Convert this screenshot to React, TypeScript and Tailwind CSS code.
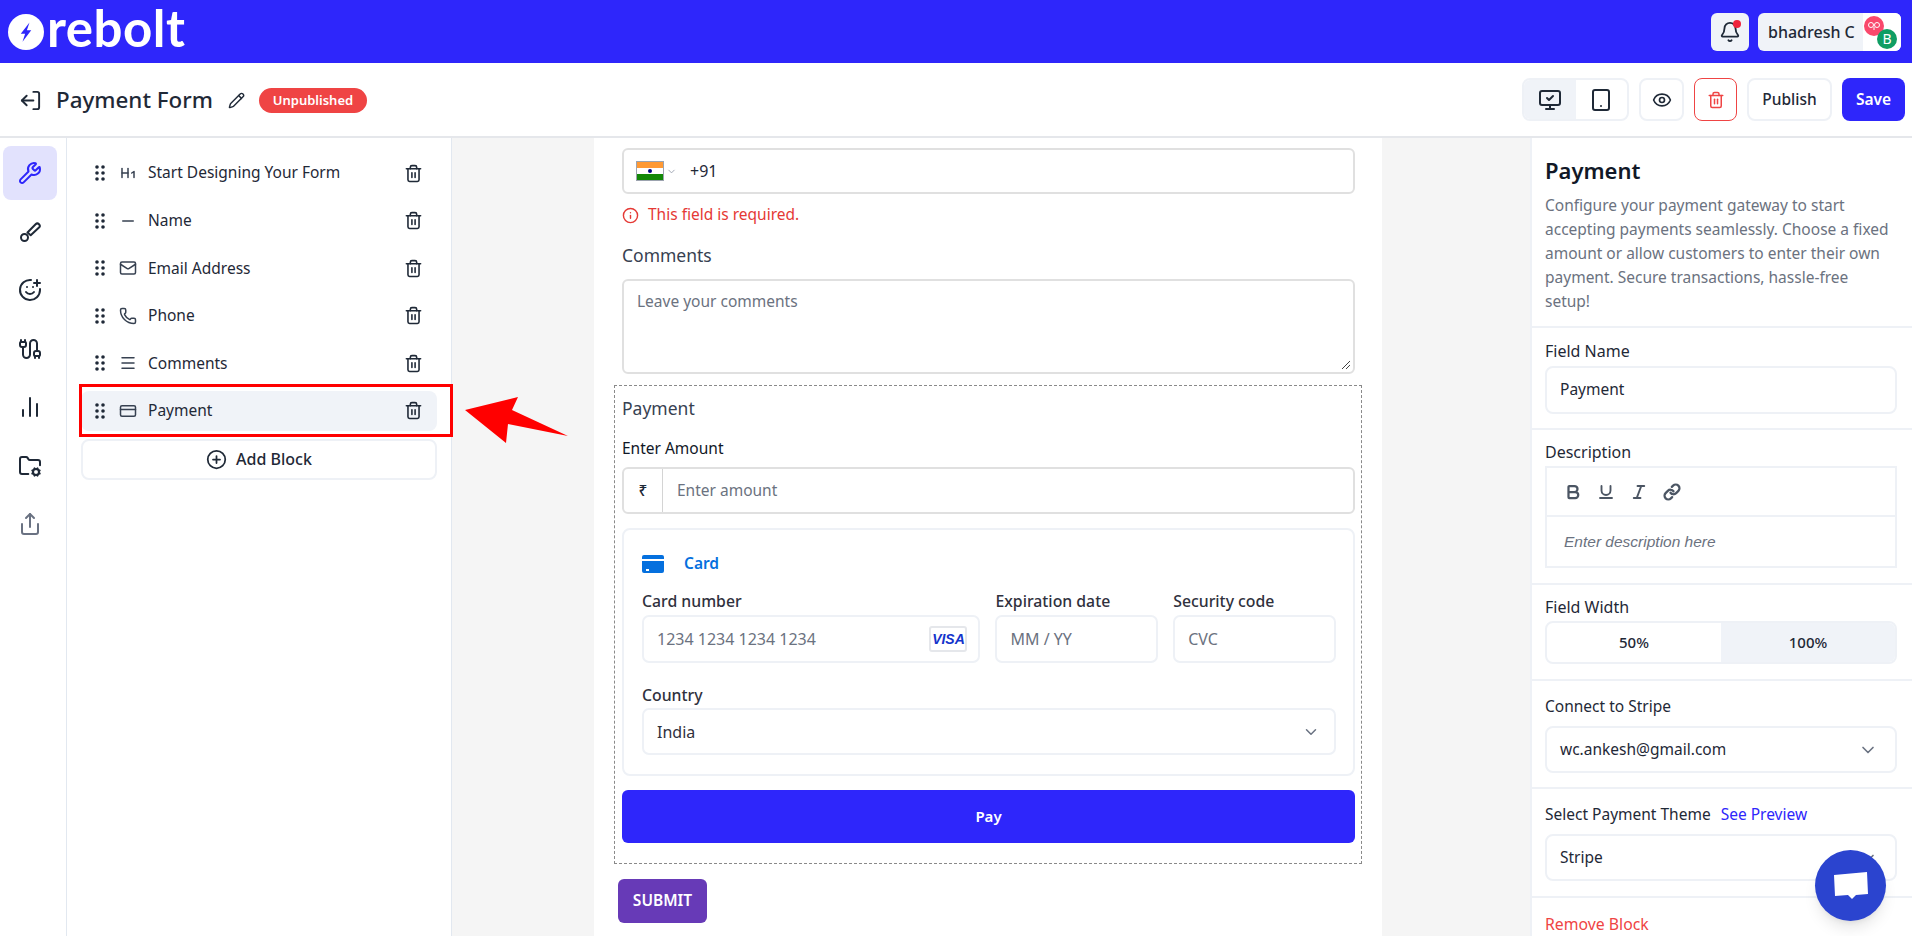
import {
  Bell, Bold, Cable, ChartNoAxesColumn, ChevronDown, CirclePlus, CreditCard, Eye, FolderCog, Heading1, Info, Italic,
  Link, LogOut, Mail, Menu, Minus, MonitorCheck, Pencil, Phone, Share, SmilePlus, Tablet, Trash2, Underline, Wrench,
} from 'lucide-react';
import type { ReactNode } from 'react';

function BrushIcon() {
  return (
    <svg width="24" height="24" viewBox="0 0 24 24" fill="none" stroke="currentColor" strokeWidth="2">
      <path d="M9.5 12.5 17.6 4.2a2.4 2.4 0 0 1 3.4 3.4l-8.3 7.7z" strokeLinejoin="round" />
      <circle cx="6.5" cy="17.5" r="3.5" />
    </svg>
  );
}

const railIcons = [
  { icon: <Wrench size={24} />, active: true },
  { icon: <BrushIcon /> },
  { icon: <SmilePlus size={24} /> },
  { icon: <Cable size={24} /> },
  { icon: <ChartNoAxesColumn size={24} /> },
  { icon: <FolderCog size={24} /> },
  { icon: <Share size={24} className="text-gray-500" /> },
];

const blocks = [
  { label: 'Start Designing Your Form', icon: <Heading1 size={18} /> },
  { label: 'Name', icon: <Minus size={18} /> },
  { label: 'Email Address', icon: <Mail size={18} /> },
  { label: 'Phone', icon: <Phone size={18} /> },
  { label: 'Comments', icon: <Menu size={18} /> },
  { label: 'Payment', icon: <CreditCard size={18} />, active: true },
];

function DragHandle() {
  return (
    <svg width="10" height="16" viewBox="0 0 10 16" fill="#1f2937" className="shrink-0">
      <circle cx="2" cy="2" r="1.8" />
      <circle cx="8" cy="2" r="1.8" />
      <circle cx="2" cy="8" r="1.8" />
      <circle cx="8" cy="8" r="1.8" />
      <circle cx="2" cy="14" r="1.8" />
      <circle cx="8" cy="14" r="1.8" />
    </svg>
  );
}

function Logo() {
  return (
    <div className="flex items-center gap-[3px]">
      <div className="w-9 h-9 rounded-full bg-white flex items-center justify-center mt-[1px]">
        <svg width="14" height="20" viewBox="0 0 16 22" fill="#2e26fb">
          <path d="M12 0 2 13h5l-3 9 10-13H9z" />
        </svg>
      </div>
      <span className="font-['Lato'] font-bold text-[51px] leading-[56px] mb-[7px] text-white tracking-[0.5px]">rebolt</span>
    </div>
  );
}

function Divider() {
  return <div className="h-[2px] bg-[#eef1f6] -ml-[13px] -mr-[15px]" />;
}

function SelectBox({ value }: { value: string }) {
  return (
    <div className="h-[47px] rounded-lg border-2 border-[#eef1f6] flex items-center justify-between pl-[13px] pr-[17px] text-[15.5px] text-[#1f2937]">
      <span>{value}</span>
      <ChevronDown size={20} className="text-gray-500" />
    </div>
  );
}

function StripeField({ label, className, children }: { label: string; className: string; children: ReactNode }) {
  return (
    <div className={className}>
      <div className="text-[15.8px] font-medium text-[#30313d] leading-[20px] mb-[4px]">{label}</div>
      <div className="h-[48px] rounded-[7px] border-2 border-[#eef1f6] flex items-center justify-between pl-[13px] pr-[11px] text-[16px] text-[#6b7280]">
        {children}
      </div>
    </div>
  );
}

export default function App() {
  return (
    <div className="h-[936px] w-[1912px] overflow-hidden relative bg-white font-['Noto_Sans',sans-serif] text-[#1f2937]">
      <header className="h-[63px] bg-[#2e26fb] flex items-center justify-between pl-[8px] pr-[11px]">
        <Logo />
        <div className="flex items-center gap-[9px]">
          <div className="w-[38px] h-[38px] rounded-md bg-[#f0f3f8] flex items-center justify-center relative">
            <Bell size={22} />
            <span className="absolute top-[7px] right-[8px] w-[8px] h-[8px] rounded-full bg-[#ef233c]" />
          </div>
          <div className="w-[143px] h-[38px] rounded-md bg-[#f0f3f8] flex items-center justify-between pl-[10px] overflow-hidden">
            <span className="text-[16px] font-medium">bhadresh C</span>
            <div className="w-[38px] h-[38px] bg-white relative">
              <span className="absolute left-[1px] top-[3px] w-[20px] h-[20px] rounded-full bg-[#f9486c] flex items-center justify-center">
                <svg width="14" height="10" viewBox="0 0 14 10" fill="none" stroke="#ffffff" strokeWidth="1">
                  <circle cx="4" cy="4" r="2.5" />
                  <circle cx="10" cy="4" r="2.5" />
                  <path d="M7 6v3" />
                </svg>
              </span>
              <span className="absolute left-[14px] top-[16px] w-[20px] h-[20px] rounded-full bg-[#0f9d63] text-white text-[14px] leading-[20px] text-center">B</span>
            </div>
          </div>
        </div>
      </header>

      <div className="h-[75px] border-b-2 border-[#e5e7eb] flex items-center justify-between pl-[19px] pr-[7px]">
        <div className="flex items-center pt-[2px]">
          <LogOut size={23} className="rotate-180" />
          <span className="ml-[14px] text-[22.4px] font-medium leading-none">Payment Form</span>
          <Pencil size={17} className="ml-[15px]" />
          <span className="ml-[14px] h-[25px] w-[108px] rounded-full bg-[#ef4444] text-white text-[13px] font-semibold flex items-center justify-center">Unpublished</span>
        </div>
        <div className="flex items-center gap-[10px]">
          <div className="flex h-[43px] w-[107px] rounded-lg border-2 border-[#eef1f6] overflow-hidden">
            <div className="w-1/2 bg-[#f0f3f8] flex items-center justify-center"><MonitorCheck size={24} /></div>
            <div className="w-1/2 flex items-center justify-center"><Tablet size={24} /></div>
          </div>
          <div className="w-[45px] h-[43px] rounded-lg border-2 border-[#eef1f6] flex items-center justify-center"><Eye size={20} /></div>
          <div className="w-[43px] h-[43px] rounded-lg border border-[#ef4444] flex items-center justify-center"><Trash2 size={18} className="text-[#ef4444]" /></div>
          <div className="w-[85px] h-[43px] rounded-lg border-2 border-[#eef1f6] flex items-center justify-center text-[15.5px] font-medium">Publish</div>
          <div className="w-[63px] h-[43px] rounded-lg bg-[#2e26fb] text-white flex items-center justify-center text-[15.5px] font-semibold">Save</div>
        </div>
      </div>

      <div className="flex h-[798px]">
        <aside className="w-[67px] shrink-0 border-r border-[#e2e8f0] pt-[8px] pl-[3px] flex flex-col gap-[4.5px]">
          {railIcons.map((item, i) => (
            <div key={i} className={`w-[54px] h-[54px] rounded-lg flex items-center justify-center ${item.active ? 'bg-[#e2e2fd] text-[#2e26fb]' : ''}`}>
              {item.icon}
            </div>
          ))}
        </aside>

        <aside className="w-[385px] shrink-0 border-r border-[#e2e8f0] pt-[15px] pl-[14px] pr-[14px]">
          <div className="flex flex-col gap-[7.6px]">
            {blocks.map(block => (
              <div key={block.label} className={`h-[40px] rounded-lg flex items-center pl-[14px] pr-[14px] ${block.active ? 'bg-[#f0f3f8]' : ''}`}>
                <DragHandle />
                <span className="w-[43px] pl-[14px] shrink-0 flex text-[#374151]">{block.icon}</span>
                <span className="flex-1 text-[15.5px] text-[#1f2937]">{block.label}</span>
                <Trash2 size={19} className="shrink-0" />
              </div>
            ))}
          </div>
          <div className="mt-[8px] h-[41px] rounded-lg border-2 border-[#eef1f6] flex items-center justify-center gap-[9px] text-[16px] font-medium">
            <CirclePlus size={21} />
            Add Block
          </div>
        </aside>

        <main className="w-[1078px] shrink-0 bg-[#f5f5f5] pl-[142px] overflow-hidden">
          <div className="w-[788px] h-[798px] bg-white pt-[10px] px-[20px]">
            <div className="ml-[8px] w-[733px]">
              <div className="h-[46px] rounded-md border-2 border-[#e0e0e0] flex items-center pl-[12px]">
                <svg width="28" height="20" viewBox="0 0 28 20" className="shrink-0">
                  <rect width="28" height="20" fill="#9ca3af" />
                  <rect x="1" y="1" width="26" height="6" fill="#ff9933" />
                  <rect x="1" y="7" width="26" height="6" fill="#ffffff" />
                  <rect x="1" y="13" width="26" height="6" fill="#138808" />
                  <circle cx="14" cy="10" r="2" fill="#000080" />
                </svg>
                <ChevronDown size={11} className="ml-[2px] text-gray-400" />
                <span className="ml-[13px] text-[16px]">+91</span>
              </div>
              <div className="flex items-center gap-[9px] mt-[11px] h-[20px] text-[15.5px] text-[#e53935]">
                <Info size={17} />
                This field is required.
              </div>
              <div className="mt-[18px] text-[17.5px] text-[#374151] leading-[24px]">Comments</div>
              <div className="mt-[12px] h-[95px] rounded-md border-2 border-[#e0e0e0] px-[13px] pt-[9px] text-[15.5px] text-[#6b7280] relative">
                Leave your comments
                <svg width="10" height="10" viewBox="0 0 10 10" className="absolute right-[2px] bottom-[2px]" stroke="#444" strokeWidth="1">
                  <path d="M9 1 1 9M9 5 5 9" />
                </svg>
              </div>
            </div>

            <div className="mt-[11px] h-[479px] border border-dashed border-[#8a8a8a] pl-[7px] pr-[6px] pt-[9px]">
              <div className="text-[17.5px] leading-[26px] text-[#374151]">Payment</div>
              <div className="mt-[17px] text-[15.5px] leading-[20px] text-[#111827]">Enter Amount</div>
              <div className="mt-[9px] h-[47px] rounded-md border-2 border-[#e0e0e0] flex items-center text-[15.5px]">
                <span className="w-[39px] h-full border-r border-[#d4d4d4] flex items-center justify-center font-medium">₹</span>
                <span className="pl-[14px] text-[#6b7280]">Enter amount</span>
              </div>
              <div className="mt-[14px] h-[248px] rounded-lg border-2 border-[#eef1f6] pl-[18px] pr-[17px] pt-[22px]">
                <div className="flex items-center gap-[20px] text-[15.5px] font-semibold text-[#0570de] h-[24px]">
                  <svg width="22" height="18" viewBox="0 0 22 18" fill="#0570de">
                    <path d="M2 0h18a2 2 0 0 1 2 2v2H0V2a2 2 0 0 1 2-2zM0 6h22v10a2 2 0 0 1-2 2H2a2 2 0 0 1-2-2zm4 8v2h3v-2z" />
                  </svg>
                  Card
                </div>
                <div className="flex gap-[15px] mt-[15px]">
                  <StripeField label="Card number" className="w-[339px]">
                    1234 1234 1234 1234
                    <span className="w-[38px] h-[26px] rounded-[3px] border-2 border-[#e5e7eb] flex items-center justify-center text-[14px] font-['Liberation_Sans',sans-serif] font-bold italic text-[#1434cb]">VISA</span>
                  </StripeField>
                  <StripeField label="Expiration date" className="w-[163px]">MM / YY</StripeField>
                  <StripeField label="Security code" className="w-[163px]">CVC</StripeField>
                </div>
                <div className="mt-[22px] text-[15.8px] font-medium text-[#30313d] leading-[20px]">Country</div>
                <div className="mt-[3px] h-[47px] rounded-[7px] border-2 border-[#eef1f6] flex items-center justify-between pl-[13px] pr-[14px] text-[16px] text-[#30313d]">
                  India
                  <ChevronDown size={18} className="text-gray-500" />
                </div>
              </div>
              <div className="mt-[14px] h-[53px] rounded-md bg-[#2e26fb] text-white text-[15px] font-semibold flex items-center justify-center">Pay</div>
            </div>

            <div className="mt-[15px] ml-[4px] w-[89px] h-[44px] rounded-md bg-[#673ab7] text-white text-[15.5px] font-semibold flex items-center justify-center">SUBMIT</div>
          </div>
        </main>

        <aside className="w-[382px] shrink-0 border-l-2 border-[#eef1f6] pl-[13px] pr-[15px] pt-[15px] overflow-hidden">
          <h2 className="text-[22px] font-semibold leading-[34px] text-[#111827]">Payment</h2>
          <p className="mt-[6px] text-[15.5px] leading-[24px] text-[#6b7280] w-[352px]">
            Configure your payment gateway to start accepting payments seamlessly. Choose a fixed amount or allow customers to enter their own payment. Secure transactions, hassle-free setup!
          </p>
          <div className="mt-[13px]"><Divider /></div>

          <div className="mt-[13px] text-[16px] leading-[20px]">Field Name</div>
          <div className="mt-[5px] h-[48px] rounded-lg border-2 border-[#eef1f6] flex items-center pl-[13px] text-[15.5px]">Payment</div>
          <div className="mt-[14px]"><Divider /></div>

          <div className="mt-[12px] text-[16px] leading-[20px]">Description</div>
          <div className="mt-[4px] h-[102px] border-2 border-[#eef1f6]">
            <div className="h-[49px] border-b-2 border-[#eef1f6] flex items-center pl-[17px] gap-[15px] text-[#4b5563]">
              <Bold size={18} strokeWidth={3} />
              <Underline size={18} strokeWidth={2.5} />
              <Italic size={18} strokeWidth={2.5} />
              <Link size={18} strokeWidth={3} />
            </div>
            <div className="h-[49px] flex items-center pl-[17px] text-[15.5px] italic text-[#6b7280] font-['Liberation_Sans',sans-serif]">Enter description here</div>
          </div>
          <div className="mt-[15px]"><Divider /></div>

          <div className="mt-[12px] text-[16px] leading-[20px]">Field Width</div>
          <div className="mt-[4px] h-[43px] rounded-lg border-2 border-[#eef1f6] flex text-[15px] font-medium overflow-hidden">
            <div className="w-1/2 flex items-center justify-center">50%</div>
            <div className="w-1/2 bg-[#f0f3f8] flex items-center justify-center">100%</div>
          </div>
          <div className="mt-[15px]"><Divider /></div>

          <div className="mt-[15px] text-[15.5px] leading-[20px]">Connect to Stripe</div>
          <div className="mt-[10px]"><SelectBox value="wc.ankesh@gmail.com" /></div>
          <div className="mt-[14px]"><Divider /></div>

          <div className="mt-[15px] flex gap-[10px] text-[15.5px] leading-[20px]">
            Select Payment Theme
            <span className="text-[#2e26fb]">See Preview</span>
          </div>
          <div className="mt-[10px]"><SelectBox value="Stripe" /></div>
          <div className="mt-[15px]"><Divider /></div>

          <div className="mt-[16px] text-[15.8px] leading-[20px] text-[#ef4444]">Remove Block</div>
        </aside>
      </div>

      {/* разметка поверх скриншота */}
      <div className="absolute left-[79px] top-[384px] w-[374px] h-[53px] border-[3px] border-[#ff0000]" />
      <svg className="absolute left-[460px] top-[390px]" width="115" height="60" viewBox="0 0 115 60" fill="#ff0000">
        <path d="M5 20 58 7 52 20 108 46 48 34 46 53z" />
      </svg>

      <div className="absolute left-[1815px] top-[850px] w-[71px] h-[71px] rounded-full bg-[#2b44cf] flex items-center justify-center shadow-lg">
        <svg width="36" height="30" viewBox="0 0 36 30" fill="#ffffff">
          <path d="M1 4 34 1l1 22-12 1-4 4-4-4-13 1z" />
        </svg>
      </div>
    </div>
  );
}
